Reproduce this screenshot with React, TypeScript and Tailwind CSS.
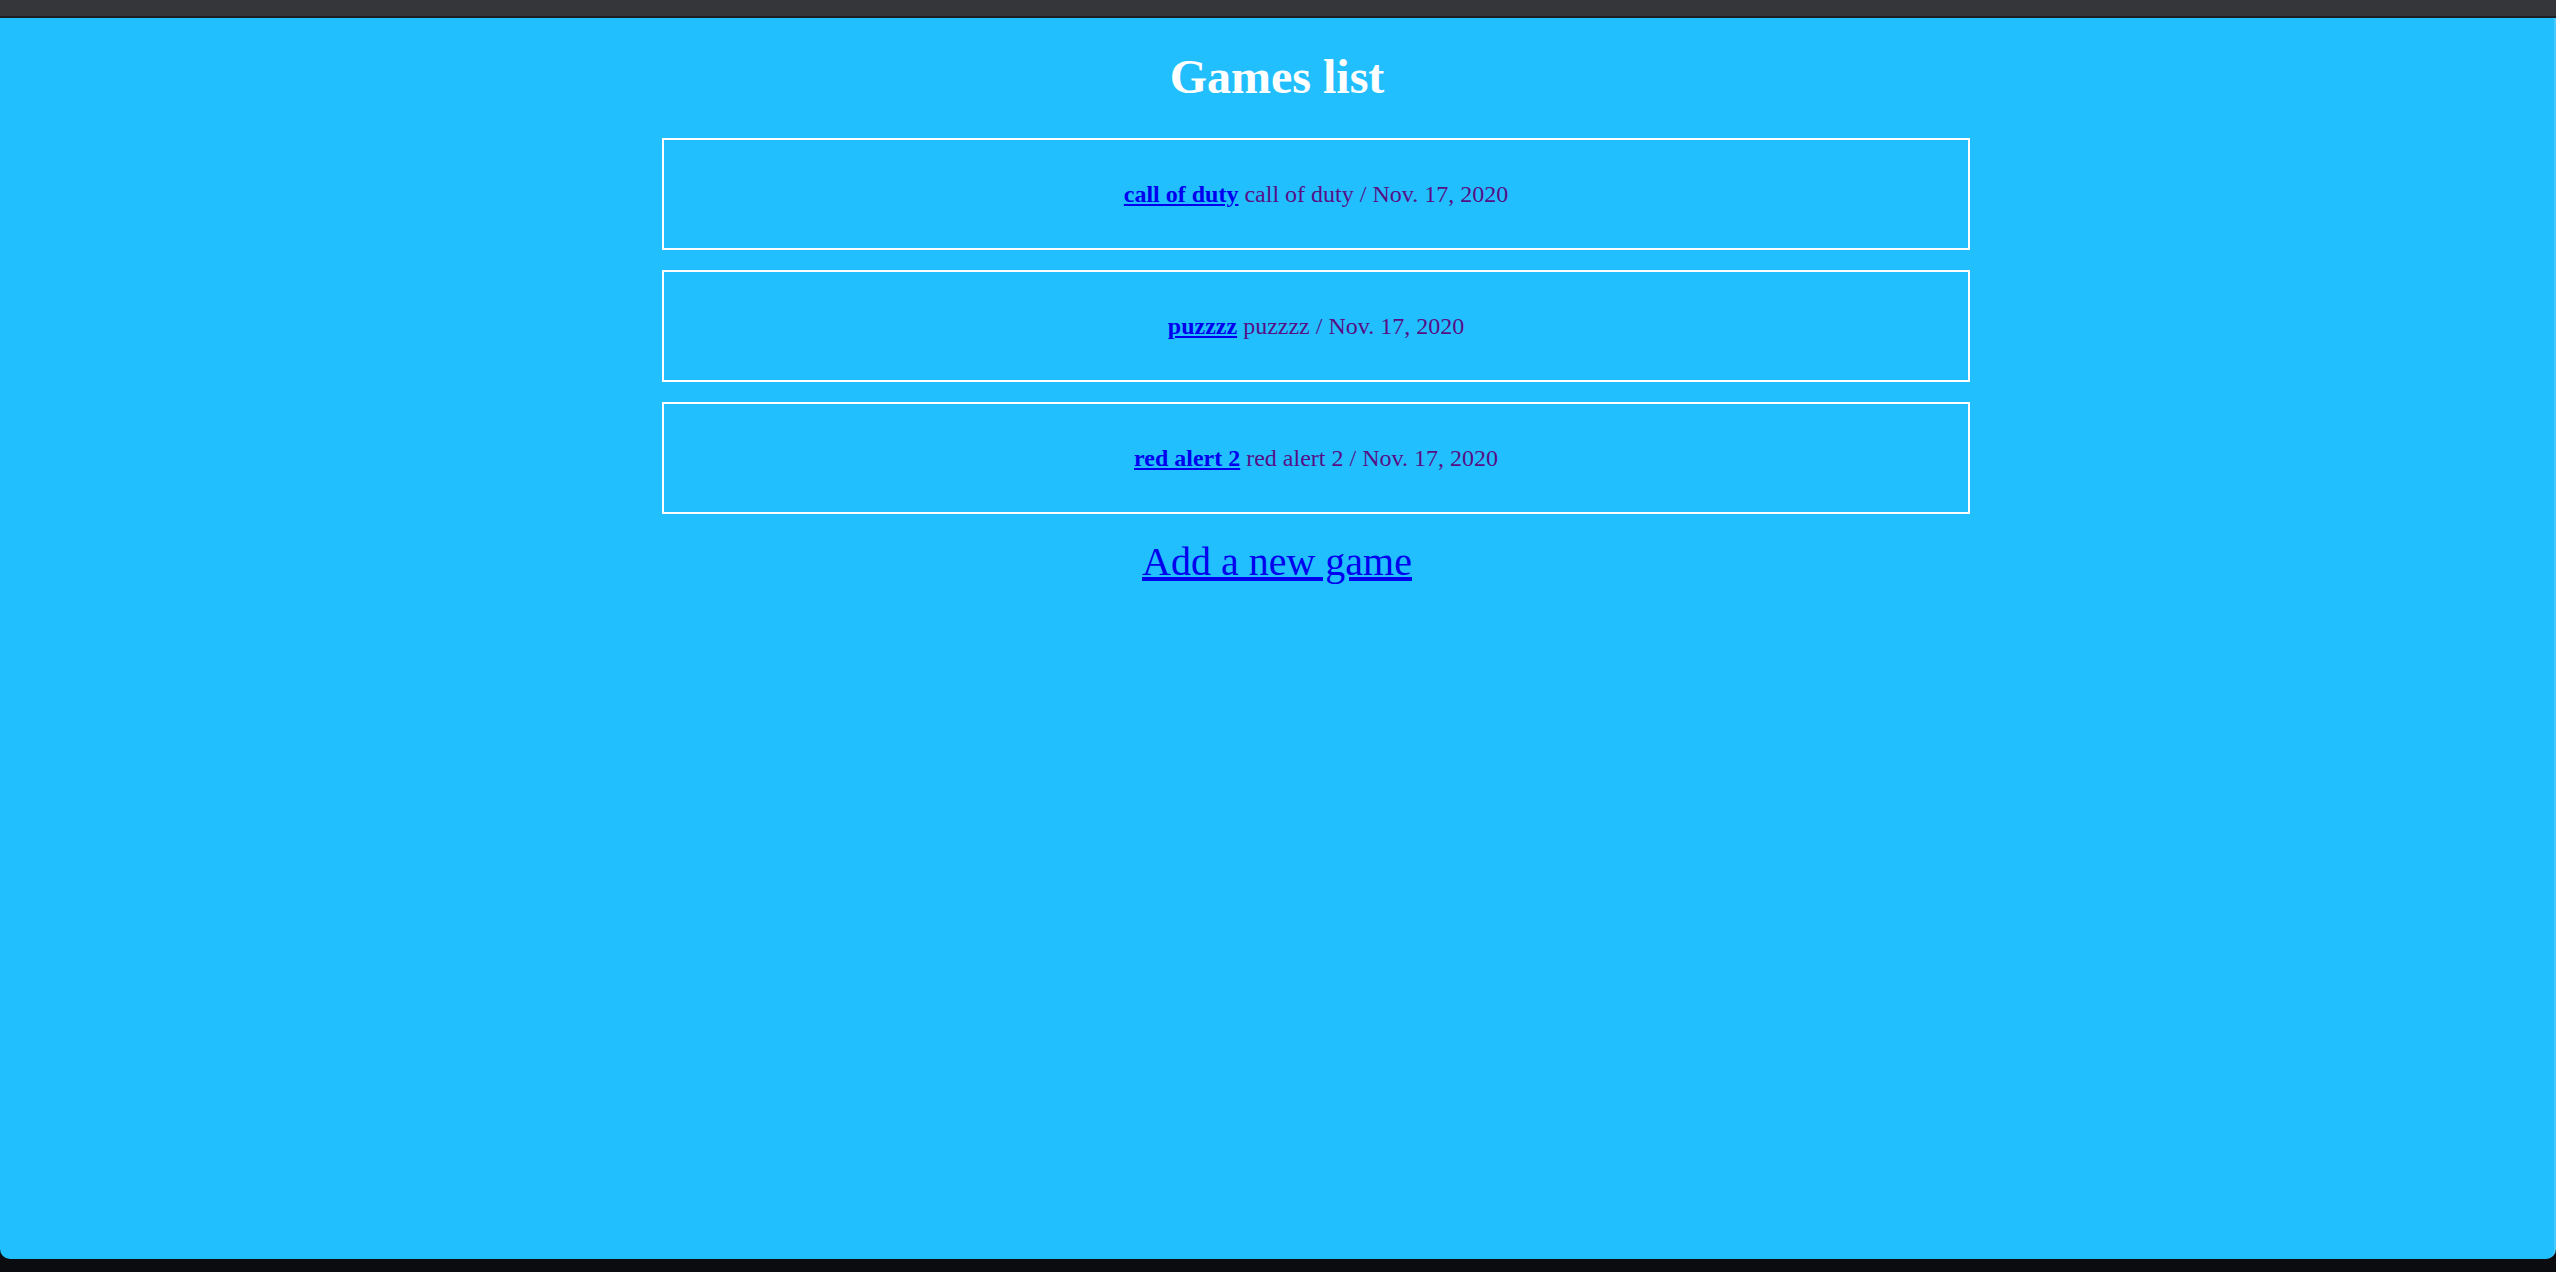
const games = [
  { id: 1, name: "call of duty", date: "Nov. 17, 2020" },
  { id: 2, name: "puzzzz", date: "Nov. 17, 2020" },
  { id: 3, name: "red alert 2", date: "Nov. 17, 2020" },
];

export default function App() {
  return (
    <div className="h-[1272px] flex flex-col bg-[#0b0c10] font-['Liberation_Serif','Times_New_Roman',serif]">
      {/* Browser chrome strip */}
      <div className="h-[18px] bg-[#35363a] border-b-2 border-[#1e1f22] shrink-0"></div>

      <main className="h-[1241px] bg-[#22bffe] rounded-b-[10px] border-r-2 border-[#46c9fe] pt-[32px]">
        <h1 className="text-center text-white font-bold text-[48px] leading-[53px]">Games list</h1>

        <div className="mt-[35px] ml-[662px] w-[1308px] flex flex-col gap-[20px]">
          {games.map(game => (
            <div key={game.id} className="h-[112px] border-2 border-white flex items-center justify-center text-[24px] leading-[28px] text-[#560f86]">
              <a href="#" className="font-bold text-[#0000ee] underline">{game.name}</a>
              <span>&nbsp;{game.name} / {game.date}</span>
            </div>
          ))}
        </div>

        <div className="mt-[26px] text-center">
          <a href="#" className="text-[40px] leading-[44px] text-[#0000ee] underline">Add a new game</a>
        </div>
      </main>
    </div>
  );
}
